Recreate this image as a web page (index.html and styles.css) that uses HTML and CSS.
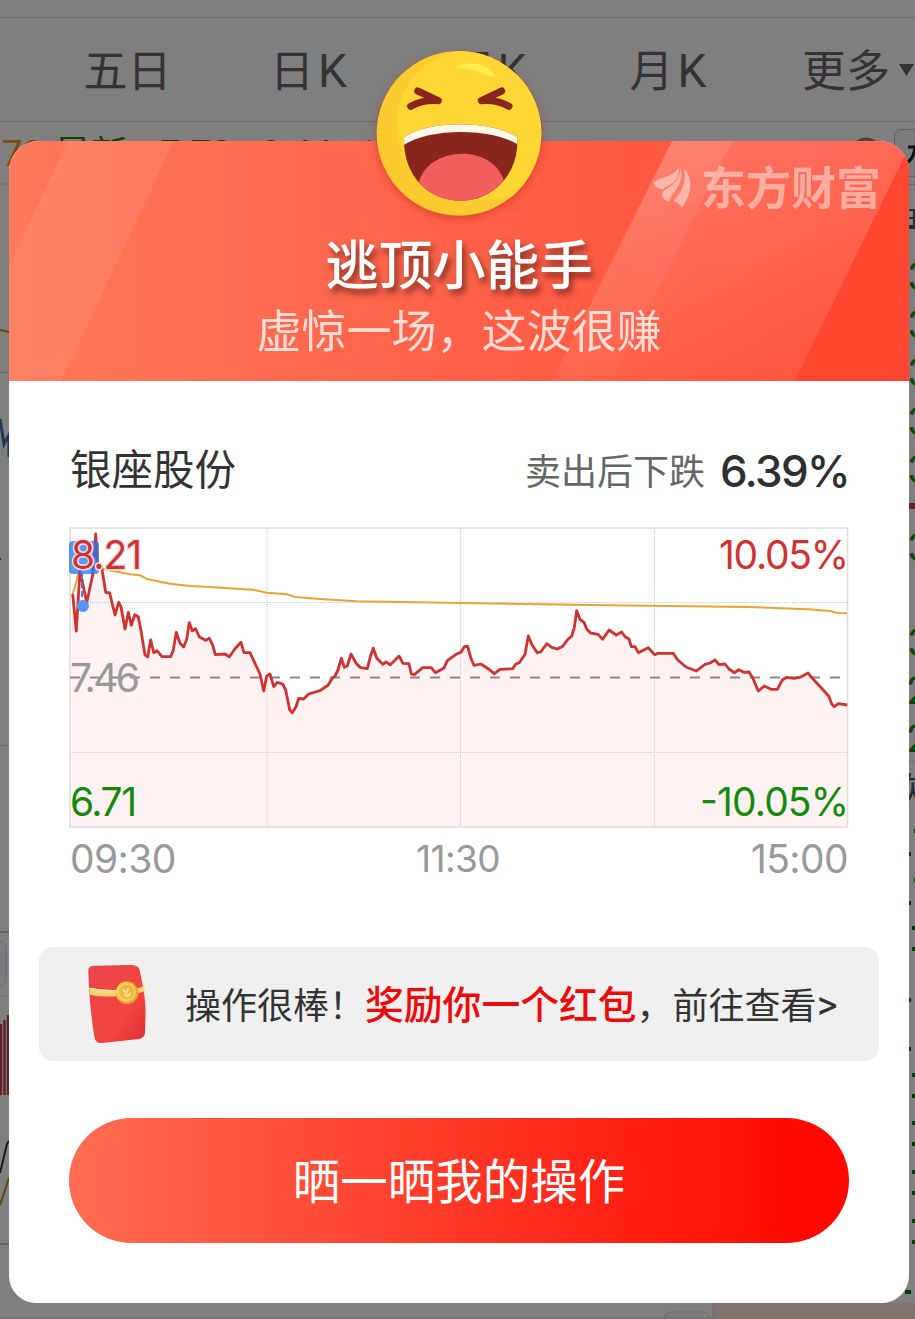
FILE: index.html
```html
<!DOCTYPE html>
<html lang="zh-CN">
<head>
    <meta charset="UTF-8">
    <meta name="viewport" content="width=device-width, initial-scale=1.0">
    <title>逃顶小能手</title>
    <link rel="stylesheet" href="styles.css">
</head>
<body>
    <!-- Quote page behind the dialog -->
    <div class="page">
        <nav class="tabs">
            <span class="tab">五日</span>
            <span class="tab">日<i>K</i></span>
            <span class="tab">周<i>K</i></span>
            <span class="tab">月<i>K</i></span>
            <span class="tab more">更多<svg width="16" height="12" viewBox="0 0 16 12"><path d="M0 0H15L7.5 12Z" fill="#666"/></svg></span>
        </nav>
        <svg class="quote" width="915" height="1197" viewBox="0 122 915 1197">
            <g class="quote-text">
                <text x="-8" y="166" fill="#f79a16">.70</text>
                <text x="54" y="168" fill="#138a0b">最新</text>
                <text x="160" y="165.500" fill="#138a0b">7.72</text>
                <text x="250" y="165.500" fill="#138a0b">-0.44</text>
                <text x="357" y="165.500" fill="#138a0b">1</text>
            </g>
            <circle cx="866" cy="153" r="14" fill="none" stroke="#a87878" stroke-width="3"/>
            <path d="M0 184H9M0 996H9M909 761H915" stroke="#ddd" stroke-width="1"/>
            <path d="M0 932H9M0 1244H9" stroke="#d0d0d0" stroke-width="2"/>
            <path d="M0 372.500H9M0 745.500H9" stroke="#999" stroke-dasharray="1 2"/>
            <path d="M0 330L9 332" stroke="#c8840f" stroke-width="2"/>
            <path d="M0 419L4 444L9 435V457" fill="none" stroke="#3973b5" stroke-width="3"/>
            <path d="M0 559H1" stroke="#555" stroke-width="2"/>
            <rect x="-20" y="941" width="26" height="45" rx="6" fill="#f6f8fa" stroke="#d0d6de"/>
            <path d="M1 1095V1024M4.500 1095V1020M8 1095V1015" stroke="#c0454a" stroke-width="2.400"/>
            <path d="M0 1173L7 1144L9 1141" fill="none" stroke="#333" stroke-width="2"/>
            <path d="M0 1205L9 1178" stroke="#c8840f" stroke-width="2"/>
            <rect x="894.500" y="129.500" width="40" height="47" rx="7" fill="#f9f9fb" stroke="#bcc0c8"/>
            <rect x="894.500" y="184.500" width="40" height="100" rx="5" fill="none" stroke="#d0d0d0"/>
            <path d="M908 147H915M915 147Q914 158 908 162" fill="none" stroke="#222" stroke-width="3"/>
            <path d="M909 210H914V226H909M909 218H914M909 228H915" fill="none" stroke="#555" stroke-width="2"/>
            <g class="side-text">
                <text x="908" y="290">3</text>
                <text x="908" y="338">3</text>
                <text x="908" y="386">3</text>
                <text x="908" y="435">3</text>
                <text x="908" y="483">3</text>
                <text x="908" y="561">3</text>
                <text x="908" y="656">3</text>
                <text x="907" y="704">2</text>
                <text x="907" y="752">2</text>
            </g>
            <path d="M909 506H915" stroke="#d74040" stroke-width="6"/>
            <text x="890" y="802" font-size="34" fill="#555">欢</text>
            <path d="M914 831H915M909 854H911M914 880H915M909 903H911M912 928H915M912 949H915M909 1000H911M909 1049H911M912 1075H915M912 1096H915M912 1123H915M912 1144H915M912 1172H915M912 1193H915M912 1221H915M912 1242H915M905 1292H911" stroke="#0e750c" stroke-width="4"/>
            <rect x="713" y="1303" width="202" height="16" fill="#ffe9db"/>
            <path d="M713 1303V1319M0 1318H713" stroke="#d8d8d8"/>
            <rect x="665" y="1312" width="44" height="20" rx="6" fill="none" stroke="#d4d4d8"/>
        </svg>
    </div>
    <div class="mask"></div>

    <!-- Dialog -->
    <div class="modal">
        <header class="modal-header">
            <svg class="header-bg" width="900" height="240" viewBox="0 0 900 240">
                <defs>
                    <linearGradient id="base" x1="0" x2="1" y1="0" y2="0">
                        <stop offset="0" stop-color="#ff795c"/>
                        <stop offset=".4" stop-color="#ff664c"/>
                        <stop offset=".75" stop-color="#ff573f"/>
                        <stop offset="1" stop-color="#ff4a34"/>
                    </linearGradient>
                    <linearGradient id="sheen" x1="0" x2="0" y1="0" y2="1">
                        <stop offset="0" stop-color="#fff" stop-opacity=".17"/>
                        <stop offset="1" stop-color="#fff" stop-opacity=".03"/>
                    </linearGradient>
                    <linearGradient id="band" x1="0" x2="0" y1="0" y2="1">
                        <stop offset="0" stop-color="#fff" stop-opacity=".1"/>
                        <stop offset="1" stop-color="#fff" stop-opacity=".02"/>
                    </linearGradient>
                </defs>
                <rect width="900" height="240" fill="url(#base)"/>
                <path d="M59 0H165L52 240H-54Z" fill="#fff" opacity=".07"/>
                <path d="M663 0H903L786 240H543Z" fill="url(#sheen)"/>
                <path d="M663 0H723L603 240H543Z" fill="url(#band)"/>
                <path d="M903 0L786 240H900Z" fill="#ff4630"/>
            </svg>
            <div class="brand">
                <svg width="38" height="42" viewBox="0 0 114 126">
                    <path d="M3 46C30 26 50 36 78 2C78 52 52 46 28 68C10 62 2 58 3 46Z"/>
                    <path d="M83 2C94 50 64 68 46 104C30 96 26 86 28 75C52 54 80 50 83 2Z"/>
                    <path d="M92 4C122 30 116 88 86 122C82 112 74 106 62 102C86 76 102 44 92 4Z"/>
                </svg>
                <span>东方财富</span>
            </div>
            <svg class="emoji" width="190" height="190" viewBox="0 0 570 570">
                <defs><clipPath id="face"><circle cx="282" cy="280" r="247"/></clipPath></defs>
                <circle cx="282" cy="280" r="247" fill="#fccb30"/>
                <path clip-path="url(#face)" d="M300 30C170 45 97 140 97 250C97 400 200 492 330 481C420 480 480 465 510 440L600 280L460 0Z" fill="#ffd633"/>
                <path d="M270 84C300 62 370 65 391 110C350 108 340 84 270 84Z" fill="#ffee4b"/>
                <path d="M158 153L220 182Q175 178 137 199M410 153L349 182Q395 178 432 199" fill="none" stroke="#88261d" stroke-width="21" stroke-linecap="round" stroke-linejoin="round"/>
                <clipPath id="mouth"><path d="M117 292C190 240 380 240 457 292C463 400 385 482 287 482C188 482 113 405 117 292Z"/></clipPath>
                <g clip-path="url(#mouth)">
                    <rect x="100" y="240" width="370" height="250" fill="#88261d"/>
                    <path d="M110 240H465V317C380 262 190 262 110 319Z" fill="#fff8e6"/>
                    <path d="M160 435C180 315 395 305 420 435L400 490H180Z" fill="#f25d5e"/>
                </g>
            </svg>
            <h1>逃顶小能手</h1>
            <p>虚惊一场，这波很赚</p>
        </header>

        <section class="stock">
            <div class="stock-row">
                <span class="stock-name">银座股份</span>
                <span class="stock-change"><span>卖出后下跌</span><b>6.39%</b></span>
            </div>
            <svg class="chart" width="780" height="302" viewBox="-1 -1 780 302">
                <path id="area" fill="#fdeeee" fill-opacity=".75"/>
                <path d="M197 0V299M390.500 0V299M584.500 0V299M0 74.500H777M0 224.500H777" stroke="#ccc" stroke-dasharray="1 1"/>
                <rect x="0" y="0" width="777.500" height="299" fill="none" stroke="#dedcdd" stroke-width="1.500"/>
                <path d="M0 149.500H777" stroke="#8c8889" stroke-width="2" stroke-dasharray="10 10"/>
                <polyline points="2.700,66 6,55 9,43 20,39 35,41.300 43,43 60,46.300 70,47.300 78,51.300 100,55.700 120,58 140,59 182,61.700 197,64.700 217,66.300 225,69 250,71 287,73.300 390,75 520,77 678,79 738,81.300 760,83 768,85 777,85.300" fill="none" stroke="#e9a52f" stroke-width="2"/>
                <polyline id="price" fill="none" stroke="#cf3231" stroke-width="2.800" stroke-linejoin="round"/>
                <rect x="-1" y="13" width="30" height="33" rx="4" fill="#2874ed" opacity=".75"/>
                <path d="M12 45V77" stroke="#5577d8" stroke-width="2" stroke-dasharray="6 3"/>
                <circle cx="13" cy="78" r="6" fill="#5795f8"/>
                <text x="1" y="41" textLength="71" class="up-halo">8.21</text>
                <text x="1" y="41" textLength="71" class="up">8.21</text>
                <text x="779" y="41" textLength="130" text-anchor="end" class="up">10.05%</text>
                <text x="0" y="164" textLength="70" class="flat">7.46</text>
                <text x="0" y="288" textLength="67" class="down">6.71</text>
                <text x="779" y="288" textLength="149" text-anchor="end" class="down">-10.05%</text>
            </svg>
            <div class="times">
                <span>09:30</span>
                <span class="noon">11:30</span>
                <span>15:00</span>
            </div>
        </section>

        <a class="reward">
            <svg width="64" height="84" viewBox="80 35 192 252">
                <defs>
                    <linearGradient id="packet" x1="0" x2="1" y1="0" y2="1">
                        <stop offset="0" stop-color="#e9474b"/>
                        <stop offset=".65" stop-color="#f44340"/>
                        <stop offset="1" stop-color="#db302f"/>
                    </linearGradient>
                </defs>
                <path d="M102 46L217 44Q238 45 241 60C250 105 261 145 258 205L257 246Q256 263 239 266L128 278Q109 280 106 264C96 205 89 140 87 63Q86 47 102 46Z" fill="url(#packet)"/>
                <path d="M90 112Q135 122 178 118V137Q130 142 91 133ZM229 116L255 107L257 122L231 131Z" fill="#fbd36a"/>
                <path d="M90 114Q135 123 175 121" stroke="#fff0a8" stroke-width="4" fill="none"/>
                <circle cx="203" cy="127" r="34" fill="#e3a735"/>
                <circle cx="200" cy="125" r="30" fill="#f9cf57"/>
                <circle cx="203" cy="125" r="22" fill="#edb944"/>
                <path d="M190 118L202 127L207 114M193 132L205 138L214 128" fill="none" stroke="#fbe084" stroke-width="6"/>
            </svg>
            <span class="reward-text">操作很棒！<em>奖励你一个红包</em>，前往查看<i>&gt;</i></span>
        </a>

        <button class="share" type="button">晒一晒我的操作</button>
    </div>

    <script>
        // Intraday price line, as x,y inside the chart box
        const points = "2.7,66 6.3,103 10,42 16.7,74.7 22.7,47 25.7,6 27.3,33.7 30,40.3 31.3,37 35.7,64.3 39.7,65 45,87 48.7,74.3 51,78.7 55,101 58.3,84.3 61.3,97.3 64.7,86.7 68.3,88.7 70.7,101 75,127 77.7,129 80.7,112 83.7,124.7 87,122.7 92,128.7 100.7,128.7 103.3,122 106.3,104.3 110,115.3 113.7,119 116.7,111.3 119.3,94.7 122.3,102.7 125.7,100.7 129.3,109 135.7,112.3 139.3,110.3 142.7,117 145.3,126.7 155,126 159.3,128.7 165,120.7 171,114.3 174,124.7 180,124.7 190,146 193.7,163 196.7,148 200,146 203.7,158.7 207.3,154.3 212.7,156 215.7,162 219.7,182 222.3,184.7 226,178.7 228.7,170.3 233.7,171 238.7,166 250,162.7 258.3,157 261.7,151 265,148 268,142 271.3,130.3 274.3,139.3 277.3,138 281,126 285.7,134.7 290,139.3 297.3,140.7 300.3,128.7 303.3,120.3 306.7,130 312.7,136.3 316,134 320.3,136.7 329,128 333,135.3 339,135.7 341.3,146 344.3,146.7 352.7,139.7 361.3,139.7 365.3,144.7 374,140 377.3,132.7 386,126.3 391,124.3 394.3,118.7 397.7,118.3 400.7,129.7 404,137.3 410.7,136 418.3,140.7 424.3,145.7 430,141.3 442.7,140.7 445.7,136 449.3,134.7 455,126.3 458.3,108 461.7,116.3 467.3,124.7 470.7,124 476.7,115.7 481.7,119.3 487.3,121 492.7,118.3 497.3,112 501.7,108 504.3,99.3 506.7,82.7 510,91.3 514,94.3 516.7,101 520.7,105 528,106.3 532.7,111.3 539,102 546.3,107 551.7,104 555,108.7 559,111 561.3,118.7 565,118.7 568.3,124.7 578.3,119.7 584.7,126.7 588,125.3 603.3,125.3 607.7,132 616,139 626.3,143 635,136.3 640,135 645,132 649,136.7 655,136 659,141 664.3,144.7 669,141.7 673.7,144.3 679,144 682.7,150 688.3,163 694.3,158 701,161.3 707.3,161.3 712.3,152 716.7,149.3 724,150.3 730.7,149 738,145 743.3,151.3 758.7,168 761.7,176 764.3,178.7 768.3,175.7 777.3,177";
        document.getElementById('price').setAttribute('points', points);
        document.getElementById('area').setAttribute('d', `M0 299V66L${points} V299Z`);
    </script>
</body>
</html>
```
FILE: styles.css
```css
* {
    box-sizing: border-box;
}

body {
    margin: 0;
    position: relative;
    height: 1319px;
    padding: 141px 6px 0 9px;
    overflow: hidden;
    background-color: #fff;
    color: #333;
    font-family: Roboto, "Noto Sans CJK SC", sans-serif;
}

/* Page under the mask */
.page {
    position: absolute;
    top: 0;
    left: 0;
    width: 915px;
    height: 1319px;
}

.tabs {
    display: grid;
    grid-template-columns: 37px 181px 181px 178px 182px 156px;
    height: 105px;
    margin-top: 17px;
    padding-top: 4px;
    border-top: 1px solid #dcdcdc;
    border-bottom: 1px solid #dcdcdc;
    align-items: center;
    text-align: center;
    font-size: 44px;
    line-height: 60px;
    color: #666;
}

.tab:first-child {
    grid-column: 2;
}

.tab i {
    font-style: normal;
    font-size: 46px;
    margin-left: 4px;
}

.more {
    display: flex;
    align-items: center;
    justify-content: flex-end;
    white-space: nowrap;
    gap: 9px;
}

.more svg {
    margin-top: -4px;
}

.quote {
    display: block;
}

.quote-text {
    font-size: 37px;
}

.side-text {
    font-size: 38px;
    fill: #138a0b;
}

.mask {
    position: absolute;
    top: 0;
    left: 0;
    width: 915px;
    height: 1319px;
    background-color: rgba(0, 0, 0, 0.5);
}

/* Dialog */
.modal {
    position: relative;
    width: 900px;
    height: 1162px;
    border-radius: 30px 30px 27px 27px;
    background-color: #fff;
}

.modal-header {
    position: relative;
    height: 240px;
    padding-top: 93px;
    text-align: center;
    color: #fff;
}

.header-bg {
    position: absolute;
    top: 0;
    left: 0;
    border-radius: 30px 30px 0 0;
}

.brand {
    position: absolute;
    top: 14px;
    right: 28px;
    display: flex;
    align-items: center;
    gap: 10px;
    height: 60px;
    font-size: 45px;
    font-weight: 700;
    opacity: 0.45;
    fill: #fff;
}

.brand svg {
    margin-top: 6px;
}

.emoji {
    position: absolute;
    top: -101px;
    left: 356px;
    filter: drop-shadow(0 3px 4px rgba(190, 40, 20, 0.5));
}

.modal-header h1 {
    position: relative;
    margin: 0;
    font-size: 53.5px;
    font-weight: 500;
    line-height: 66px;
    text-shadow: 3px 5px 6px rgba(80, 30, 20, 0.75);
}

.modal-header p {
    position: relative;
    margin: 0;
    font-size: 45px;
    line-height: 66px;
    opacity: 0.78;
}

.stock {
    padding: 45px 60px 0;
}

.stock-row {
    display: flex;
    justify-content: space-between;
    align-items: center;
    height: 90px;
}

.stock-name {
    padding: 0 0 8px 1px;
    font-size: 41.5px;
}

.stock-change {
    display: flex;
    align-items: center;
    gap: 15px;
    font-size: 36px;
    color: #666;
}

.stock-change span {
    padding-bottom: 5px;
}

.stock-change b {
    font-family: Inter, sans-serif;
    font-size: 44px;
    font-weight: 500;
    letter-spacing: -1.7px;
    color: #2f2f2f;
}

.chart {
    display: block;
    margin-top: 11px;
    font-family: Inter, sans-serif;
    font-size: 39px;
}

.up {
    fill: #cf3231;
}

.up-halo {
    fill: none;
    stroke: #f3dfe8;
    stroke-width: 3;
}

.flat {
    fill: #999;
}

.down {
    fill: #138a0b;
}

.times {
    display: grid;
    grid-template-columns: 1fr auto 1fr;
    align-items: center;
    height: 58px;
    padding: 0 1px;
    font-family: Inter, sans-serif;
    font-size: 39px;
    letter-spacing: -0.6px;
    color: #999;
}

.times span:last-child {
    text-align: right;
}

.noon {
    padding-right: 2px;
    font-size: 37px;
}

.reward {
    display: flex;
    align-items: center;
    gap: 35px;
    height: 114px;
    margin: 60px 30px 0;
    padding-left: 47px;
    border-radius: 14px;
    background-color: #f0f0f0;
    white-space: nowrap;
}

.reward-text {
    padding-top: 5px;
    font-size: 36px;
    line-height: 56px;
}

.reward-text em {
    font-style: normal;
    font-weight: 500;
    font-size: 38.8px;
    color: #ec0a0a;
}

.reward-text i {
    font-style: normal;
    font-size: 40px;
}

.share {
    display: block;
    width: 780px;
    height: 125px;
    margin: 57px 60px 0;
    padding: 0 0 4px;
    border: none;
    border-radius: 63px;
    background: linear-gradient(90deg, #ff6d52, #ff0800 94%);
    color: #fff;
    font-family: inherit;
    font-size: 47.5px;
    cursor: pointer;
}
```
